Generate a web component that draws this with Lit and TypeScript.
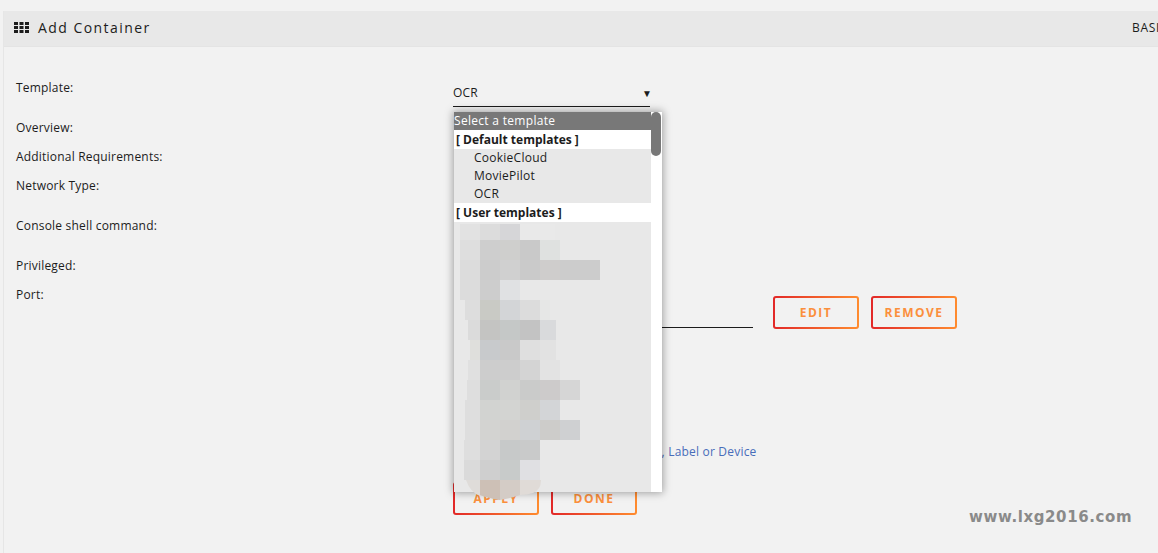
import { LitElement, html, css, svg } from "lit";
import { customElement } from "lit/decorators.js";

type Cell = [number, number, string];
const ROWS: Array<[number, number, Cell[]]> = [
  [224, 16, [[460, 20, "#e2e2e2"], [480, 20, "#dcdcdc"], [500, 20, "#d6d6d8"], [520, 35, "#e9e9e9"]]],
  [240, 20, [[460, 20, "#dedede"], [480, 20, "#cecece"], [500, 20, "#cfcfcd"], [520, 20, "#c9c9c9"], [540, 20, "#dfe1e0"]]],
  [260, 20, [[460, 20, "#dcdcdc"], [480, 20, "#cccccc"], [500, 20, "#d0d0d0"], [520, 20, "#cacaca"], [540, 20, "#cfcdcc"], [560, 40, "#cccccc"]]],
  [280, 20, [[460, 20, "#dcdcdc"], [480, 20, "#cdcdcd"], [500, 20, "#e0e1e3"]]],
  [300, 20, [[465, 15, "#dddddd"], [480, 20, "#c9cac5"], [500, 20, "#d3d5d7"], [520, 20, "#dcdcdc"], [540, 10, "#e6e7e6"]]],
  [320, 20, [[468, 12, "#dbdbdb"], [480, 20, "#c4c4c2"], [500, 20, "#c5c8c7"], [520, 20, "#c3c3c3"], [540, 16, "#d9dadc"]]],
  [340, 20, [[470, 10, "#dfdfdc"], [480, 20, "#c8cacc"], [500, 20, "#c9c9c9"], [520, 20, "#dfdfdf"], [540, 16, "#e2e2e2"]]],
  [360, 20, [[468, 12, "#e0e0e0"], [480, 20, "#cdcdcd"], [500, 20, "#cdcdcd"], [520, 20, "#d4d4d4"], [540, 20, "#e3e3e3"]]],
  [380, 20, [[467, 13, "#dedede"], [480, 20, "#cacccb"], [500, 20, "#d1d2d0"], [520, 20, "#cacbca"], [540, 20, "#cdcbcb"], [560, 20, "#d6d6d6"]]],
  [400, 20, [[465, 15, "#dedede"], [480, 20, "#d2d3d1"], [500, 20, "#d3d4d2"], [520, 20, "#cfcfcc"], [540, 20, "#d3d5d7"]]],
  [420, 20, [[465, 15, "#dedede"], [480, 20, "#d3d3d1"], [500, 20, "#d2d1cf"], [520, 20, "#cfd1d3"], [540, 20, "#cdccca"], [560, 20, "#cfd0d2"]]],
  [440, 20, [[464, 16, "#dedede"], [480, 20, "#d3d3d3"], [500, 20, "#c7c9c9"], [520, 20, "#c9caca"]]],
  [460, 20, [[464, 16, "#dadada"], [480, 20, "#cfcfcf"], [500, 20, "#c8cbca"], [520, 20, "#e0e0e3"]]],
];

@customElement("app-root")
export class AppRoot extends LitElement {
  static styles = css`
    :host {
      display: block;
      height: 553px;
      overflow: hidden;
      position: relative;
      background: #f2f2f2;
      font-family: "Open Sans", "Noto Sans", sans-serif;
      font-size: 12px;
      letter-spacing: 0.2px;
      color: #1c1c1c;
    }
    .page {
      height: 542px;
      margin-top: 11px;
      margin-left: 3px;
      border-left: 1px solid #e6e6e6;
      display: flex;
      flex-direction: column;
    }
    .bar {
      height: 36px;
      flex: none;
      background: #e8e8e8;
      border-bottom: 1px solid #e4e4e4;
      box-sizing: border-box;
      display: flex;
      align-items: center;
      padding: 0 0 3px 10px;
      overflow: hidden;
      white-space: nowrap;
    }
    .bar svg { flex: none; margin-right: 9px; }
    .title {
      flex: 0 0 1094px;
      font-size: 14px;
      letter-spacing: 1.45px;
    }
    .view { flex: none; font-size: 12px; letter-spacing: 0.7px; }
    .form {
      flex: 1;
      display: grid;
      grid-template-columns: 449px 1fr;
    }
    .labels {
      padding: 32px 0 0 12px;
      display: flex;
      flex-direction: column;
    }
    .labels div { height: 29px; line-height: 17px; }
    .labels .t { height: 40px; }
    .labels .n, .labels .c { height: 40px; }
    .controls {
      display: flex;
      flex-direction: column;
    }
    .select {
      margin-top: 37px;
      width: 197px;
      height: 18px;
      padding-bottom: 4px;
      border-bottom: 1px solid #1c1c1c;
      display: flex;
      justify-content: space-between;
      align-items: center;
      line-height: 18px;
    }
    .select i { font-style: normal; font-size: 10px; margin-right: -2px; }
    .port {
      margin-top: 189px;
      display: flex;
      align-items: flex-end;
      gap: 20px;
      height: 33px;
    }
    .input { width: 299px; margin-left: 1px; border-bottom: 1px solid #1c1c1c; height: 0; margin-bottom: 1px; }
    .btns { display: flex; gap: 12px; }
    .btn {
      box-sizing: border-box;
      width: 86px;
      height: 33px;
      display: flex;
      align-items: center;
      justify-content: center;
      border: 2px solid transparent;
      border-radius: 3px;
      background: linear-gradient(#f2f2f2, #f2f2f2) padding-box,
        linear-gradient(90deg, #e22828, #ff8c2f) border-box;
      color: #fb8f3c;
      font-size: 12px;
      font-weight: 700;
      letter-spacing: 1.5px;
    }
    .add {
      margin-top: 114px;
      color: #486dba;
      line-height: 17px;
      white-space: nowrap;
      display: flex;
      align-items: center;
      gap: 10px;
    }
    .add svg { flex: none; }
    .actions { display: flex; gap: 12px; margin-top: 22px; }
    .menu {
      position: absolute;
      left: 454px;
      top: 112px;
      width: 208px;
      height: 380px;
      background: #fff;
      box-shadow: 0 0 8px 1px rgba(0, 0, 0, 0.35);
      display: flex;
    }
    .list {
      width: 197px;
      display: flex;
      flex-direction: column;
      line-height: 18px;
    }
    .sel { background: #787878; color: #fff; height: 18px; letter-spacing: 0.3px; }
    .grp { background: #fff; color: #1c1c1c; font-weight: 700; height: 19px; padding-left: 2px; line-height: 19px; letter-spacing: 0; }
    .opt { background: #e8e8e8; height: 18px; padding-left: 20px; letter-spacing: 0.25px; }
    .rest { background: #e8e8e8; flex: 1; }
    .track { flex: 1; }
    .thumb { width: 10px; height: 44px; border-radius: 5px; background: #787878; }
    .blur { position: absolute; left: 0; top: 0; pointer-events: none; }
    .mark {
      position: absolute;
      left: 969px;
      top: 507px;
      font-family: "DejaVu Sans", sans-serif;
      font-weight: 700;
      font-size: 15px;
      line-height: 20px;
      letter-spacing: 0.6px;
      color: #8a8a8a;
    }
  `;

  render() {
    return html`
      <div class="page">
        <div class="bar">
          <svg width="15" height="11" viewBox="0 0 15 11" fill="#1c1c1c">
            ${[0, 4, 8].map((y) => [0, 5.5, 11].map((x) => svg`<rect x=${x} y=${y} width="4" height="3"></rect>`))}
          </svg>
          <span class="title">Add Container</span>
          <span class="view">BASIC VIEW</span>
        </div>
        <div class="form">
          <div class="labels">
            <div class="t">Template:</div>
            <div>Overview:</div>
            <div>Additional Requirements:</div>
            <div class="n">Network Type:</div>
            <div class="c">Console shell command:</div>
            <div>Privileged:</div>
            <div>Port:</div>
          </div>
          <div class="controls">
            <div class="select"><span>OCR</span><i>▼</i></div>
            <div class="port">
              <div class="input"></div>
              <div class="btns">
                <div class="btn">EDIT</div>
                <div class="btn">REMOVE</div>
              </div>
            </div>
            <div class="add">
              <svg width="12" height="12" viewBox="0 0 12 12" fill="#486dba"><path d="M5 1h2v4h4v2H7v4H5V7H1V5h4z"></path></svg>
              <span>Add another Path, Port, Variable, Label or Device</span>
            </div>
            <div class="actions">
              <div class="btn">APPLY</div>
              <div class="btn">DONE</div>
            </div>
          </div>
        </div>
      </div>
      <div class="menu">
        <div class="list">
          <div class="sel">Select a template</div>
          <div class="grp">[ Default templates ]</div>
          <div class="opt">CookieCloud</div>
          <div class="opt">MoviePilot</div>
          <div class="opt">OCR</div>
          <div class="grp">[ User templates ]</div>
          <div class="rest"></div>
        </div>
        <div class="track"><div class="thumb"></div></div>
      </div>
      <svg class="blur" width="1158" height="553" viewBox="0 0 1158 553">
        ${ROWS.map(([y, h, cells]) =>
          cells.map(([x, w, fill]) => svg`<rect x=${x} y=${y} width=${w} height=${h} fill=${fill}></rect>`)
        )}
        <path d="M466 480h14v16q-10-4-14-16z" fill="#dfdcd9"></path>
        <path d="M480 480h20v20q-4 0-10-2q-6-1-10-3z" fill="#cdc0b6"></path>
        <path d="M500 480h20v15q-8 3-20 5z" fill="#d4ccc6"></path>
        <path d="M520 480h21q0 10-8 13q-6 2-13 2z" fill="#e0dbd7"></path>
      </svg>
      <div class="mark">www.lxg2016.com</div>
    `;
  }
}
